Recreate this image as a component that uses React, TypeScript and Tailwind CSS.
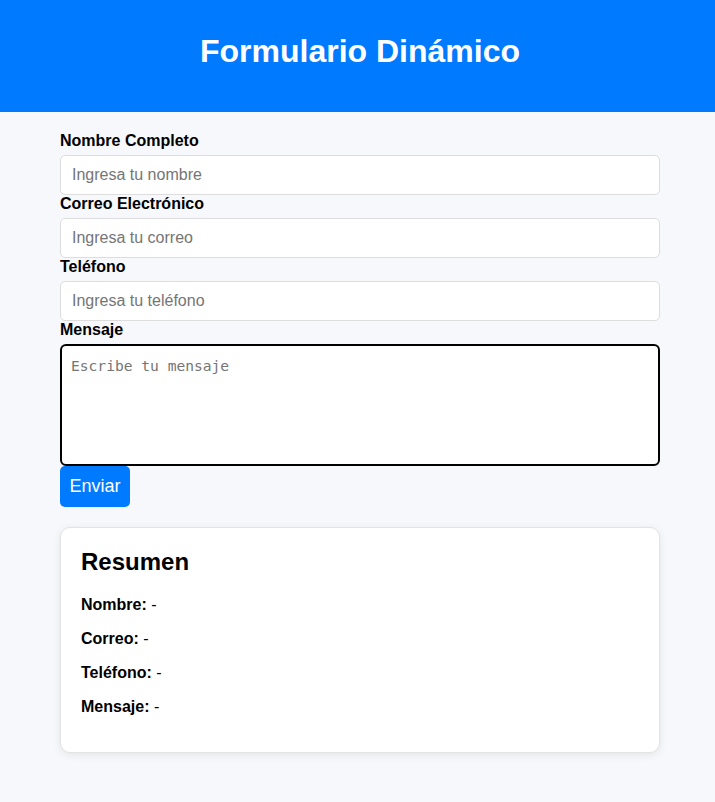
export default function App() {
  return (
    <div className="min-h-[802px] bg-[#f7f8fc] font-['Liberation_Sans',Arial,sans-serif] text-black">
      <header className="h-[112px] bg-[#007bff] pt-[33px] text-center">
        <h1 className="pl-[5px] text-[32px] leading-[37px] font-bold text-white">Formulario Dinámico</h1>
      </header>

      <main className="ml-[60px] w-[600px] pt-[20px] pb-[50px]">
        <form className="flex flex-col" onSubmit={(e) => e.preventDefault()}>
          <label className="mb-[5px] text-[16px] leading-[18px] font-bold">Nombre Completo</label>
          <input
            type="text"
            placeholder="Ingresa tu nombre"
            className="h-[40px] rounded-[5px] border border-[#dddddd] bg-white px-[11px] text-[16px] placeholder:text-[#757575] outline-none"
          />
          <label className="mb-[5px] text-[16px] leading-[18px] font-bold">Correo Electrónico</label>
          <input
            type="email"
            placeholder="Ingresa tu correo"
            className="h-[40px] rounded-[5px] border border-[#dddddd] bg-white px-[11px] text-[16px] placeholder:text-[#757575] outline-none"
          />
          <label className="mb-[5px] text-[16px] leading-[18px] font-bold">Teléfono</label>
          <input
            type="tel"
            placeholder="Ingresa tu teléfono"
            className="h-[40px] rounded-[5px] border border-[#dddddd] bg-white px-[11px] text-[16px] placeholder:text-[#757575] outline-none"
          />
          <label className="mb-[5px] text-[16px] leading-[18px] font-bold">Mensaje</label>
          <textarea
            autoFocus
            placeholder="Escribe tu mensaje"
            className="h-[122px] resize-none rounded-[6px] border-2 border-black bg-white px-[9px] pt-[11px] pb-[10px] font-['DejaVu_Sans_Mono',monospace] text-[14.6px] leading-[18px] placeholder:text-[#757575] outline-none"
          />
          <button
            type="submit"
            className="h-[41px] w-[70px] rounded-[5px] bg-[#007bff] text-[18px] text-white"
          >
            Enviar
          </button>
        </form>

        <section className="mt-[20px] rounded-[10px] border border-[#e3e3e3] bg-white px-[20px] pt-[20px] pb-[20px] shadow-[0_2px_8px_rgba(0,0,0,0.08)]">
          <h2 className="mb-[20px] text-[24px] leading-[28px] font-bold">Resumen</h2>
          <p className="mb-[16px] text-[16px] leading-[18px]"><strong>Nombre:</strong> -</p>
          <p className="mb-[16px] text-[16px] leading-[18px]"><strong>Correo:</strong> -</p>
          <p className="mb-[16px] text-[16px] leading-[18px]"><strong>Teléfono:</strong> -</p>
          <p className="mb-[16px] text-[16px] leading-[18px]"><strong>Mensaje:</strong> -</p>
        </section>
      </main>
    </div>
  );
}
